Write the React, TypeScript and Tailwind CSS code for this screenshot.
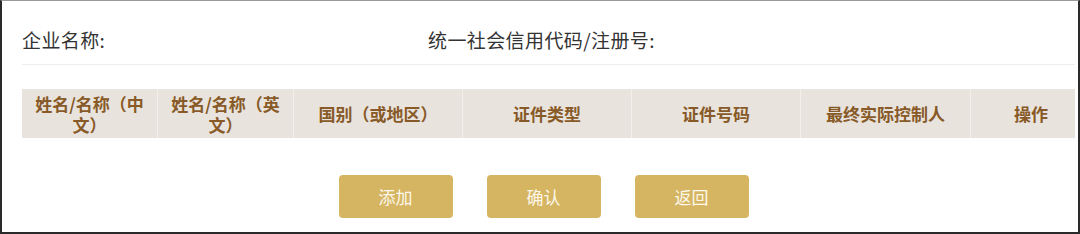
const columns = [
  { label: "姓名/名称（中文）", w: "w-[135px] px-[12px]" },
  { label: "姓名/名称（英文）", w: "w-[136px] px-[12px]" },
  { label: "国别（或地区）", w: "w-[169px] px-[12px]" },
  { label: "证件类型", w: "w-[169px] px-[12px]" },
  { label: "证件号码", w: "w-[169px] px-[12px]" },
  { label: "最终实际控制人", w: "w-[170px] px-[12px]" },
  { label: "操作", w: "w-[105px] pl-[16px]" },
];

const buttons = ["添加", "确认", "返回"];

export default function App() {
  return (
    <div
      className="h-[234px] w-[1080px] bg-white border-t border-t-[#9a9a9a] border-x-2 border-x-[#2a2a2a] border-b-2 border-b-[#2a2a2a] pl-[20px] pr-[3px]"
      style={{ fontFamily: '"Noto Sans CJK SC", "Noto Sans", sans-serif' }}
    >
      <div className="flex pt-[27px] pb-[12px] border-b border-[#eeeeee] text-[19px] leading-[24px] tracking-[0.4px] text-[#333333]">
        <div className="w-[406px]">企业名称:</div>
        <div>统一社会信用代码/注册号:</div>
      </div>

      <div className="mt-[24px] flex h-[49px] bg-[#e9e3de]">
        {columns.map((c, i) => (
          <div
            key={c.label}
            className={`${c.w} flex items-center justify-center text-center text-[17px] leading-[21px] font-bold text-[#875a27] ${
              i > 0 ? "border-l border-[#f3efeb]" : ""
            }`}
          >
            {c.label}
          </div>
        ))}
      </div>

      <div className="mt-[37px] ml-[-10px] flex justify-center gap-[34px]">
        {buttons.map((b) => (
          <button
            key={b}
            type="button"
            className="h-[43px] w-[114px] rounded-[4px] bg-[#d5b562] text-[17px] text-[#fdf8ea]"
          >
            {b}
          </button>
        ))}
      </div>
    </div>
  );
}
